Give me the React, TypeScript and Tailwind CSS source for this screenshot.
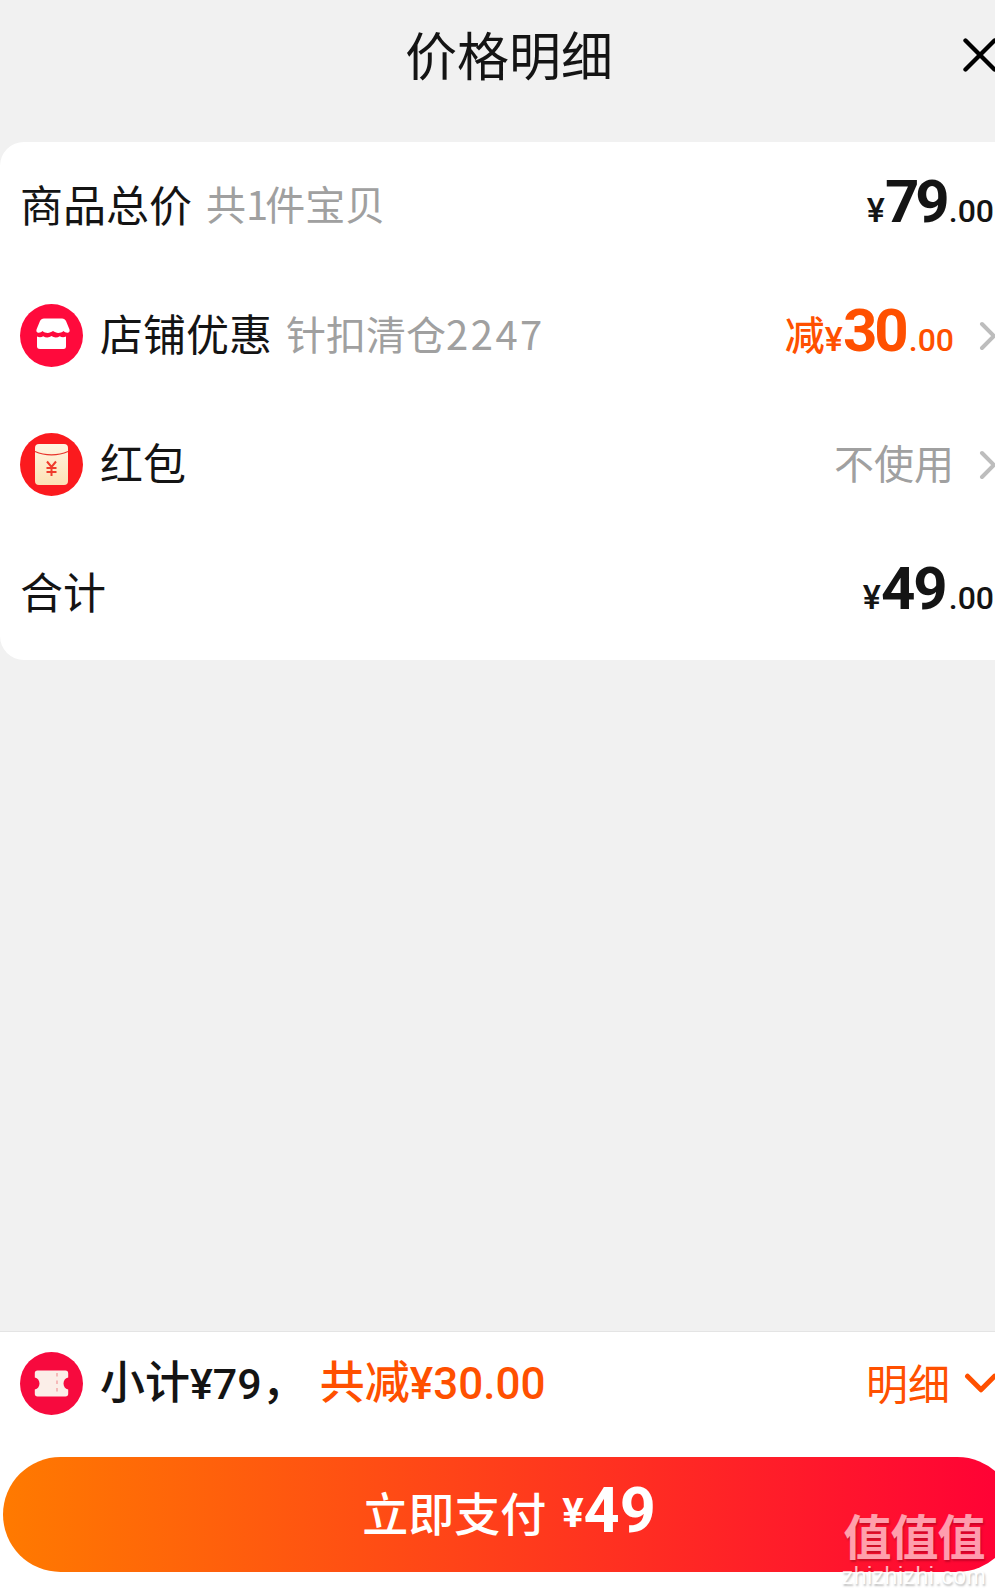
import { ChevronDown, ChevronRight, X } from 'lucide-react'

const cjk = { fontFamily: '"Noto Sans CJK SC", sans-serif' }

// Store badge
function ShopIcon() {
  return (
    <svg viewBox="0 0 63 63" className="w-[63px] h-[63px] shrink-0">
      <circle cx="31.5" cy="31.5" r="31.5" fill="#ff0a3c" />
      <path d="M21 14.500h21c2 0 3.200.9 4 2.600l3.400 8.200c.5 1.400.2 2.900-.9 3.200-2.200.6-3.600-.4-5-1.500-1.600 1.400-3.400 1.900-5.200 1.900-1.900 0-3.600-.8-5.300-1.900-1.700 1.100-3.400 1.900-5.300 1.900s-3.600-.5-5.200-1.900c-1.400 1.100-2.800 2.100-5 1.500-1.100-.3-1.400-1.800-.9-3.200l3.400-8.200c.8-1.700 2-2.600 4-2.600z" fill="#fff" />
      <path d="M17 32.500c2.300 1 4.600.8 6.200-.3 2.500 1.700 6 1.600 8.300-.1 2.300 1.700 5.800 1.800 8.300.1 1.600 1.100 3.900 1.300 6.200.3v10c0 1.700-1.100 2.500-2.500 2.500h-23.500c-1.700 0-3-.8-3-2.500z" fill="#fff" />
    </svg>
  )
}

// Red packet badge
function PacketIcon() {
  return (
    <svg viewBox="0 0 63 63" className="w-[63px] h-[63px] shrink-0">
      <defs>
        <linearGradient id="packet" x1="0" y1="0" x2="0" y2="1">
          <stop offset="0" stopColor="#fff4e2" />
          <stop offset="1" stopColor="#fde2b4" />
        </linearGradient>
      </defs>
      <circle cx="31.5" cy="31.5" r="31.5" fill="#fb1a1e" />
      <rect x="15" y="11" width="33" height="41" rx="4" fill="url(#packet)" />
      <path d="M15 18.500c10 4.500 23 4.500 33 0" fill="none" stroke="#e8342c" strokeWidth="1.200" />
      <path d="M27 28.500l4.500 5.500 4.500-5.500M26.500 35h10M26.500 39h10M31.500 34v9" fill="none" stroke="#ef3b2c" strokeWidth="2" />
    </svg>
  )
}

// Ticket badge
function TicketIcon() {
  return (
    <svg viewBox="0 0 63 63" className="w-[63px] h-[63px] shrink-0">
      <circle cx="31.5" cy="31.5" r="31.5" fill="#f70a3e" />
      <path d="M17.500 18.500h28c1.700 0 2.700 1 2.700 2.700v4.300c-2.900.6-4.700 3-4.700 6s1.800 5.400 4.700 6v4.300c0 1.700-1 2.700-2.700 2.700h-28c-1.700 0-2.700-1-2.700-2.700v-4.300c2.900-.6 4.700-3 4.700-6s-1.800-5.400-4.700-6v-4.300c0-1.700 1-2.700 2.700-2.700z" fill="#fbeee8" />
      <path d="M37 21v22" stroke="#f3a8a8" strokeWidth="1.500" strokeDasharray="3.500 4" />
    </svg>
  )
}

function Price({ big, className }: { big: string; className: string }) {
  return (
    <span className={`flex items-baseline mb-[6px] font-['Roboto',sans-serif] ${className}`}>
      <span className="text-[34px] font-medium tracking-normal">¥</span>
      <span className="text-[60px] leading-none font-bold">{big}</span>
      <span className="text-[32px] font-medium ml-[3px] tracking-normal">.00</span>
    </span>
  )
}

const ArrowRight = () => (
  <ChevronRight size={48} strokeWidth={2} className="text-[#bdbdbd] ml-[10px] -mr-[15px]" />
)

export default function App() {
  return (
    <div className="w-[995px] h-[1594px] overflow-hidden bg-[#f1f1f1]" style={cjk}>
      <div className="w-[1018px] h-full flex flex-col">
        {/* Header */}
        <header className="h-[142px] shrink-0 px-[21px] pb-[34px] flex items-center justify-between">
          <span className="w-[46px]" />
          <h1 className="text-[52px] leading-none text-[#141414]">价格明细</h1>
          <X size={58} strokeWidth={1.8} className="text-black -mr-[12px] mt-[2px]" />
        </header>

        {/* Price card */}
        <section className="bg-white rounded-[24px] h-[518px] pl-[20px] pr-[21px] flex flex-col text-[#141414]">
          <div className="h-[129px] flex items-center justify-between">
            <div className="flex items-center text-[43px] mb-[7px]">
              <span>商品总价</span>
              <span className="ml-[14px] text-[40px] text-[#a0a0a0]">
                共<span className="tracking-[-3px]">1</span>件宝贝
              </span>
            </div>
            <Price big="79" className="text-[#141414] mr-[3px] tracking-[-4px]" />
          </div>
          <div className="h-[129px] flex items-center justify-between">
            <div className="flex items-center">
              <ShopIcon />
              <div className="flex items-center text-[43px] mb-[6px]">
                <span className="ml-[17px]">店铺优惠</span>
                <span className="ml-[14px] text-[40px] text-[#a0a0a0]">
                  针扣清仓<span className="tracking-[2.5px]">2247</span>
                </span>
              </div>
            </div>
            <div className="flex items-center">
              <span className="text-[40px] text-[#ff5000] font-medium mb-[6px]">减</span>
              <Price big="30" className="text-[#ff5000] tracking-[-3px]" />
              <ArrowRight />
            </div>
          </div>
          <div className="h-[129px] flex items-center justify-between">
            <div className="flex items-center text-[43px]">
              <PacketIcon />
              <span className="ml-[17px] mb-[6px]">红包</span>
            </div>
            <div className="flex items-center">
              <span className="text-[40px] text-[#a0a0a0] mb-[6px]">不使用</span>
              <ArrowRight />
            </div>
          </div>
          <div className="h-[129px] flex items-center justify-between">
            <span className="text-[43px] mb-[7px]">合计</span>
            <Price big="49" className="text-[#141414] mr-[3px] tracking-[-2px]" />
          </div>
        </section>

        {/* Bottom bar */}
        <footer className="mt-auto relative h-[263px] bg-white border-t border-[#e4e4e4] px-[3px]">
          <div className="h-[102px] mb-[23px] pl-[17px] pr-[18px] flex items-center justify-between">
            <div className="flex items-center">
              <TicketIcon />
              <span className="ml-[17px] mb-[3px] text-[45px] font-medium text-[#141414]">
                小计<span className="font-['Roboto',sans-serif] text-[43px]">¥79</span>，
              </span>
              <span className="ml-[13px] mb-[3px] text-[45px] font-medium text-[#ff5000]">
                共减<span className="font-['Roboto',sans-serif] text-[44px]">¥30.00</span>
              </span>
            </div>
            <div className="flex items-center text-[#ff5000]">
              <span className="text-[42px] mb-[3px]">明细</span>
              <ChevronDown size={54} strokeWidth={2.2} className="ml-[4px] -mr-[11px]" />
            </div>
          </div>
          <button className="w-full h-[115px] rounded-full bg-[linear-gradient(to_right,#ff7a00,#ff0036)] text-white flex items-center justify-center">
            <span className="text-[46px] font-medium mb-[6px]">立即支付</span>
            <span className="ml-[16px] text-[40px] font-bold font-['Roboto',sans-serif] mb-[2px]">¥</span>
            <span className="text-[63px] leading-none font-bold font-['Roboto',sans-serif] mb-[8px]">49</span>
          </button>

          {/* Site watermark */}
          <div className="absolute left-[839px] top-[178px] w-[150px] flex flex-col items-center text-white [text-shadow:1px_2px_2px_rgba(0,0,0,0.35)]">
            <span className="text-[48px] leading-none font-bold opacity-60 tracking-[-1px]">值值值</span>
            <span className="mt-[7px] text-[23px] leading-none font-['Liberation_Sans',sans-serif] opacity-70 tracking-[0.5px]">zhizhizhi.com</span>
          </div>
        </footer>
      </div>
    </div>
  )
}
